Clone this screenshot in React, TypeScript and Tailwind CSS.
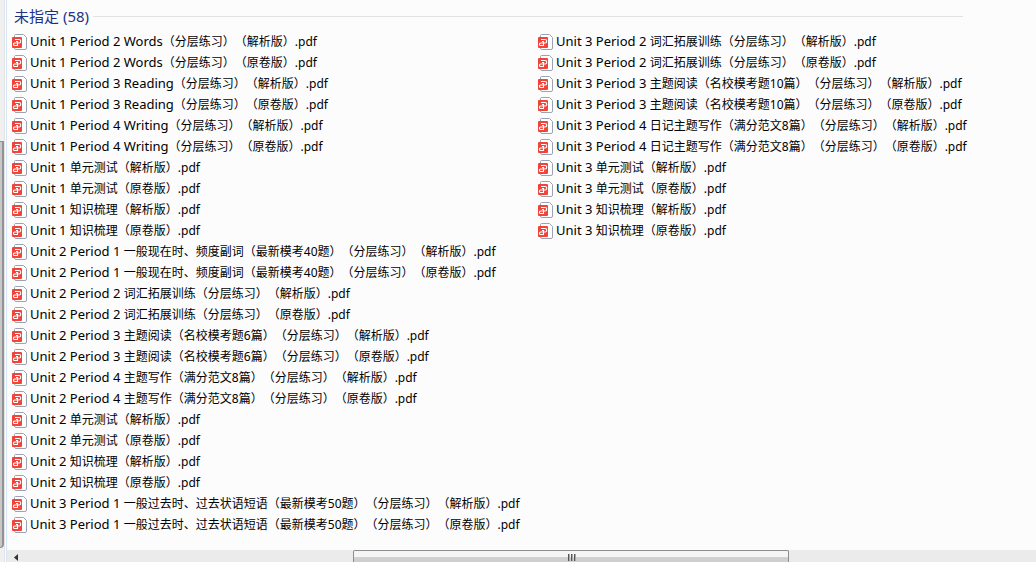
const columns = [
  [
    "Unit 1 Period 2 Words（分层练习）（解析版）.pdf",
    "Unit 1 Period 2 Words（分层练习）（原卷版）.pdf",
    "Unit 1 Period 3 Reading（分层练习）（解析版）.pdf",
    "Unit 1 Period 3 Reading（分层练习）（原卷版）.pdf",
    "Unit 1 Period 4 Writing（分层练习）（解析版）.pdf",
    "Unit 1 Period 4 Writing（分层练习）（原卷版）.pdf",
    "Unit 1 单元测试（解析版）.pdf",
    "Unit 1 单元测试（原卷版）.pdf",
    "Unit 1 知识梳理（解析版）.pdf",
    "Unit 1 知识梳理（原卷版）.pdf",
    "Unit 2 Period 1 一般现在时、频度副词（最新模考40题）（分层练习）（解析版）.pdf",
    "Unit 2 Period 1 一般现在时、频度副词（最新模考40题）（分层练习）（原卷版）.pdf",
    "Unit 2 Period 2 词汇拓展训练（分层练习）（解析版）.pdf",
    "Unit 2 Period 2 词汇拓展训练（分层练习）（原卷版）.pdf",
    "Unit 2 Period 3 主题阅读（名校模考题6篇）（分层练习）（解析版）.pdf",
    "Unit 2 Period 3 主题阅读（名校模考题6篇）（分层练习）（原卷版）.pdf",
    "Unit 2 Period 4 主题写作（满分范文8篇）（分层练习）（解析版）.pdf",
    "Unit 2 Period 4 主题写作（满分范文8篇）（分层练习）（原卷版）.pdf",
    "Unit 2 单元测试（解析版）.pdf",
    "Unit 2 单元测试（原卷版）.pdf",
    "Unit 2 知识梳理（解析版）.pdf",
    "Unit 2 知识梳理（原卷版）.pdf",
    "Unit 3 Period 1 一般过去时、过去状语短语（最新模考50题）（分层练习）（解析版）.pdf",
    "Unit 3 Period 1 一般过去时、过去状语短语（最新模考50题）（分层练习）（原卷版）.pdf",
  ],
  [
    "Unit 3 Period 2 词汇拓展训练（分层练习）（解析版）.pdf",
    "Unit 3 Period 2 词汇拓展训练（分层练习）（原卷版）.pdf",
    "Unit 3 Period 3 主题阅读（名校模考题10篇）（分层练习）（解析版）.pdf",
    "Unit 3 Period 3 主题阅读（名校模考题10篇）（分层练习）（原卷版）.pdf",
    "Unit 3 Period 4 日记主题写作（满分范文8篇）（分层练习）（解析版）.pdf",
    "Unit 3 Period 4 日记主题写作（满分范文8篇）（分层练习）（原卷版）.pdf",
    "Unit 3 单元测试（解析版）.pdf",
    "Unit 3 单元测试（原卷版）.pdf",
    "Unit 3 知识梳理（解析版）.pdf",
    "Unit 3 知识梳理（原卷版）.pdf",
  ],
];

function PdfIcon() {
  return (
    <svg className="h-4 w-4 shrink-0" viewBox="0 0 16 16" fill="none" aria-hidden="true">
      <path
        d="M3.5.5h8l3 3V14a1.5 1.5 0 0 1-1.5 1.5H4A1.5 1.5 0 0 1 2.5 14V1.5a1 1 0 0 1 1-1z"
        fill="#fff"
        stroke="#9ba2b1"
      />
      <rect y="3" width="10" height="11" rx="1" fill="#f0433a" />
      <path
        d="M3 5.5h4a1.5 1.5 0 0 1 0 3.500H2.500a1 1 0 0 0-1 1v.5a1 1 0 0 0 1 1H5.500V7.500H4"
        stroke="#fff"
        strokeWidth="1.1"
      />
    </svg>
  );
}

// The leading "Unit 1 Period 2" words are set one size up from the Chinese title
function FileName({ name }: { name: string }) {
  const prefix = name.match(/^[\w ]+/)?.[0] ?? "";

  return (
    <span className="text-xs whitespace-pre text-black">
      <span className="text-[13px]">{prefix}</span>
      {name.slice(prefix.length)}
    </span>
  );
}

function FileList({ files }: { files: string[] }) {
  return (
    <ul className="w-[526px] shrink-0">
      {files.map((name) => (
        <li key={name} className="flex h-[21px] items-center gap-0.5">
          <PdfIcon />
          <FileName name={name} />
        </li>
      ))}
    </ul>
  );
}

function VerticalScrollbar() {
  return (
    <div className="flex w-[5px] shrink-0 flex-col border-r border-[#e4e4e4] bg-[#f0f0f0]">
      <div className="h-[141px] shrink-0" />
      <div className="flex-1 rounded-br-sm border-t border-r-2 border-b border-[#929292] bg-[#c8c8ca]" />
      <div className="h-3.5 shrink-0" />
    </div>
  );
}

function HorizontalScrollbar() {
  return (
    <div className="flex h-3 shrink-0 overflow-hidden bg-[#ebebeb]">
      <button type="button" aria-label="Scroll left" className="flex w-[18px] justify-center pt-1">
        <svg className="h-[7px] w-1" viewBox="0 0 4 7" aria-hidden="true">
          <path d="M4 0v7L0 3.5z" fill="#333" />
        </svg>
      </button>
      <div className="flex-[329]" />
      <div className="flex flex-[435] justify-center rounded-t-xs border border-b-0 border-[#8d8d8d] bg-linear-to-b from-[#f5f5f5] from-50% to-[#cfcfd1] to-60% pt-[3px]">
        <svg className="h-[7px] w-[9px]" viewBox="0 0 9 7" aria-hidden="true">
          <path d="M1.5 0v7M4.5 0v7M7.5 0v7" stroke="#555" />
          <path d="M2.5 0v7M5.5 0v7M8.5 0v7" stroke="#aaa" />
        </svg>
      </div>
      <div className="flex-[247]" />
    </div>
  );
}

export default function App() {
  return (
    <div className="flex min-h-screen overflow-hidden bg-[#fcfcfc] font-['Noto_Sans','Noto_Sans_CJK_SC',sans-serif] [text-spacing-trim:space-all]">
      <VerticalScrollbar />
      <div className="w-0.5 shrink-0 border-r border-[#d6e5f5] bg-[#fcfcfc]" />
      <main className="flex min-w-0 flex-1 flex-col">
        <section className="flex-1 overflow-hidden pt-[5px] pb-3 pl-[5px]">
          <div className="mr-[73px] ml-0.5 flex h-[22px] items-center gap-1">
            <h1 className="text-[15px] whitespace-nowrap text-[#1e3287]">未指定 (58)</h1>
            <div className="h-px flex-1 bg-[#e2e2e2]" />
          </div>
          <div className="flex pt-1">
            {columns.map((files) => (
              <FileList key={files[0]} files={files} />
            ))}
          </div>
        </section>
        <HorizontalScrollbar />
      </main>
    </div>
  );
}
